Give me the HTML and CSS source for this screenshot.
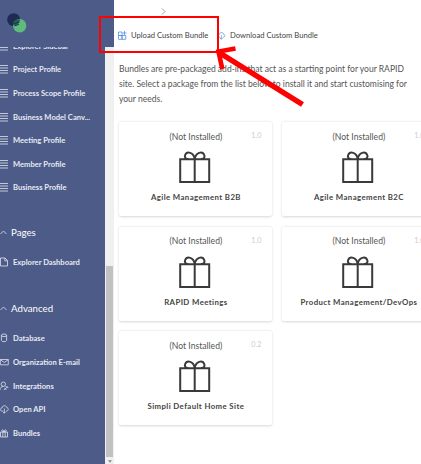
FILE: index.html
```html
<!DOCTYPE html>
<html lang="en">
<head>
<meta charset="utf-8">
<title>Bundles</title>
<link rel="stylesheet" href="styles.css">
</head>
<body>
<svg class="defs" aria-hidden="true">
  <symbol id="list" viewBox="0 0 9 10"><path d="M0 1.5h8M0 4h8M0 6.5h8M0 9h8"/></symbol>
  <symbol id="page" viewBox="0 0 9 10"><path d="M.5 1H5l2.500 2.500V9h-7zM4.800 1v2.800h2.700"/></symbol>
  <symbol id="db" viewBox="0 0 9 10"><ellipse cx="4" cy="2.300" rx="2.600" ry="1.300"/><path d="M1.400 2.300v5.200c0 1.600 5.200 1.600 5.200 0V2.300"/></symbol>
  <symbol id="mail" viewBox="0 0 9 10"><path d="M.3 2.500h8v5.300h-8zM.3 2.700l4 2.700 4-2.700"/></symbol>
  <symbol id="plug" viewBox="0 0 9 10"><circle cx="3.300" cy="3.200" r="2.200"/><path d="M0 9c0-2.200 1.300-3.400 3.300-3.600M3.800 9l3.800-3.200M5.500 5.500l2.800 1M4.500 7l1.800 1.800"/></symbol>
  <symbol id="cloud" viewBox="0 0 9 10"><path d="M2.800 7H2C-.2 7-.2 4.200 2 4c.3-3 4.300-3 4.800-.3C9 4 8.700 7 6.500 7H6M4.300 4.500v4.700M2.800 7.700l1.500 1.500 1.500-1.500"/></symbol>
  <symbol id="smallgift" viewBox="0 0 9 10"><path d="M.5 4h7v5h-7zM2.800 4v5M5.200 4v5M4 4C1 4 1.500 1.500 3 2s1 2 1 2 0-1.600 1.300-2S7 4 4 4"/></symbol>
  <symbol id="gift" viewBox="0 0 32 32"><path d="M1.200 8.300h29v22.700h-29zM15.700 8.300V31M15.700 8.300C7 8.500 5 7.500 6.200 4c1.600-4.200 8.600-3 9.500 4.300C16.600 1 23.600-.2 25.200 4c1.200 3.500-.8 4.500-9.500 4.300"/></symbol>
</svg>
<div class="app">
  <aside class="sidebar">
    <div class="brand">
      <svg class="logo" viewBox="0 0 22 22"><circle cx="7" cy="7" r="6.800" fill="#1e2b52"/><circle cx="13.300" cy="13.300" r="7" fill="#5dbb7d"/><path d="M6.400 12.500c-.6-3.500 3-6.300 7.300-5.500-.3 3.500-2.500 6.500-7.300 5.500z" fill="#25604f"/><path d="M7 11.300l5.500-1.800M7.500 13.500l5-1.500" stroke="#1e2b52"/></svg>
    </div>
    <div class="side-body">
      <nav class="menu">
        <a class="item"><svg><use href="#list"/></svg><span>Explorer Sidebar</span></a>
        <a class="item"><svg><use href="#list"/></svg><span>Project Profile</span></a>
        <a class="item"><svg><use href="#list"/></svg><span>Process Scope Profile</span></a>
        <a class="item"><svg><use href="#list"/></svg><span>Business Model Canv...</span></a>
        <a class="item"><svg><use href="#list"/></svg><span>Meeting Profile</span></a>
        <a class="item"><svg><use href="#list"/></svg><span>Member Profile</span></a>
        <a class="item"><svg><use href="#list"/></svg><span>Business Profile</span></a>
        <h2 class="group"><svg viewBox="0 0 7 5"><path d="M.5 4l3-3 3 3"/></svg>Pages</h2>
        <a class="item"><svg><use href="#page"/></svg><span>Explorer Dashboard</span></a>
        <h2 class="group advanced"><svg viewBox="0 0 7 5"><path d="M.5 4l3-3 3 3"/></svg>Advanced</h2>
        <a class="item"><svg><use href="#db"/></svg><span>Database</span></a>
        <a class="item"><svg><use href="#mail"/></svg><span>Organization E-mail</span></a>
        <a class="item"><svg><use href="#plug"/></svg><span>Integrations</span></a>
        <a class="item"><svg><use href="#cloud"/></svg><span>Open API</span></a>
        <a class="item"><svg><use href="#smallgift"/></svg><span>Bundles</span></a>
      </nav>
      <div class="scrollbar"><div class="thumb"></div><svg viewBox="0 0 5 3"><path d="M0 0h5L2.500 3z"/></svg></div>
    </div>
  </aside>
  <main class="content">
    <div class="crumb"><svg viewBox="0 0 5 7"><path d="M1 .5l3 3-3 3"/></svg></div>
    <div class="toolbar">
      <a class="action upload"><svg viewBox="0 0 9 9"><path d="M.5 1h3.500v3.500H.5zM.5 4.500H4V8.300H.5zM4 4.500h3.800v3.800H4zM6.500 0v4M4.500 2h4"/></svg><span>Upload Custom Bundle</span></a>
      <a class="action download"><svg viewBox="0 0 9 10"><use href="#cloud"/></svg><span>Download Custom Bundle</span></a>
    </div>
    <p class="intro">Bundles are pre-packaged add-ins that act as a starting point for your RAPID<br>site. Select a package from the list below to install it and start customising for<br>your needs.</p>
    <div class="cards">
      <article class="card"><span class="version">1.0</span><div class="status">(Not Installed)</div><svg class="gift"><use href="#gift"/></svg><h3>Agile Management B2B</h3></article>
      <article class="card"><span class="version">1.0</span><div class="status">(Not Installed)</div><svg class="gift"><use href="#gift"/></svg><h3>Agile Management B2C</h3></article>
      <article class="card"><span class="version">1.0</span><div class="status">(Not Installed)</div><svg class="gift"><use href="#gift"/></svg><h3>RAPID Meetings</h3></article>
      <article class="card"><span class="version">1.0</span><div class="status">(Not Installed)</div><svg class="gift"><use href="#gift"/></svg><h3>Product Management/DevOps</h3></article>
      <article class="card"><span class="version">0.2</span><div class="status">(Not Installed)</div><svg class="gift"><use href="#gift"/></svg><h3>Simpli Default Home Site</h3></article>
    </div>
  </main>
  <svg class="callout" viewBox="0 0 421 464"><path d="M100 17h118v35H100z" fill="none" stroke="#f00" stroke-width="2"/><path d="M302.500 104.500L219 52.500" fill="none" stroke="#f00" stroke-width="5.500"/><path d="M235.500 48.500l-17 3 3.800 17.500" fill="none" stroke="#f00" stroke-width="4.600"/></svg>
</div>
</body>
</html>
```
FILE: styles.css
```css
* { box-sizing: border-box; }
body { margin: 0; overflow: hidden; font-family: Lato, sans-serif; color: #444; background: #fff; }
svg { display: block; flex: none; }
.defs { position: absolute; width: 0; height: 0; }
.app { position: relative; display: flex; width: 421px; height: 464px; overflow: hidden; }

.sidebar { display: flex; flex-direction: column; flex: none; width: 114px; background: #4d5b88; }
.brand { height: 47px; padding: 13px 0 0 7px; }
.logo { width: 21px; height: 21px; }
.side-body { display: flex; flex: 1; min-height: 0; }
.menu { width: 105px; margin-top: -13px; clip-path: inset(13px 0 0 0); }
.item { display: flex; align-items: center; gap: 4px; height: 23.6px; font-size: 7.6px; font-weight: 700; color: #e6e9f2; white-space: nowrap; }
.item svg { width: 9px; height: 10px; fill: none; stroke: #dfe3ee; stroke-width: .8; }
.group { display: flex; align-items: center; gap: 4px; height: 24px; margin: 21.3px 0 6px; font-size: 9.7px; font-weight: 400; color: #fff; }
.group svg { width: 7px; height: 5px; fill: none; stroke: #dfe3ee; stroke-width: .8; }
.group.advanced { margin: 22px 0 6.6px; }
.scrollbar { display: flex; flex-direction: column; align-items: center; width: 9px; padding-top: 219px; background: #f0f0f0; }
.thumb { width: 7px; height: 191px; background: #c1c1c1; }
.scrollbar svg { width: 4px; height: 3px; margin-top: 3px; fill: #888; }

.content { flex: none; width: 340px; padding-left: 5px; }
.crumb { height: 25px; padding: 8px 0 0 42px; }
.crumb svg { width: 5px; height: 7px; fill: none; stroke: #999; stroke-width: .9; }
.toolbar { display: flex; height: 20px; gap: 8.6px; margin-left: -1px; }
.action { display: flex; align-items: center; gap: 4px; font-size: 7.65px; white-space: nowrap; }
.action svg { width: 9px; height: 9px; fill: none; stroke: #4f8fda; stroke-width: .8; }
.intro { height: 77px; margin: 0; padding-top: 17px; font-size: 8.54px; line-height: 15px; color: #555; white-space: nowrap; }
.cards { display: grid; grid-template-columns: 153px 153px; grid-auto-rows: 94px; gap: 10.7px 10px; margin-left: .4px; }
.card { position: relative; display: flex; flex-direction: column; align-items: center; padding-top: 8.8px; border-radius: 2px; box-shadow: 0 .8px 2.5px rgba(0, 0, 0, .16); }
.status { font-size: 8.6px; line-height: 13px; color: #555; }
.version { position: absolute; top: 9px; right: 11px; font-size: 7.2px; line-height: 10px; color: #ccc; }
.gift { width: 32px; height: 32px; margin: 7.2px 2px 0 0; fill: none; stroke: #3a3a3a; stroke-width: 2; }
.card h3 { margin: 8px 0 0; font-size: 7.8px; line-height: 12px; font-weight: 700; letter-spacing: .4px; white-space: nowrap; }
.callout { position: absolute; inset: 0; width: 421px; height: 464px; }
```
